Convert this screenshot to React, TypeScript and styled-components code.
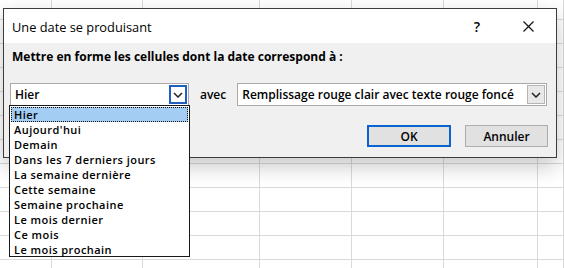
import React from 'react';
import styled, { createGlobalStyle } from 'styled-components';

const GlobalStyle = createGlobalStyle`
  html, body {
    margin: 0;
    padding: 0;
    background: #ffffff;
  }
  body {
    font-family: "Open Sans", "Noto Sans", "Liberation Sans", sans-serif;
    color: #000;
  }
`;

const columns = [52, 91, 117, 92, 92, 94, 26];
const rowCount = 11;

const Page = styled.div`
  position: relative;
  width: 564px;
  height: 268px;
  overflow: hidden;
  background: #fff;
`;

// feuille excel derriere la boite de dialogue
const Sheet = styled.div`
  display: grid;
  grid-template-columns: ${columns.map(c => `${c}px`).join(' ')};
  grid-template-rows: 20px repeat(${rowCount}, 24px);
`;

const Cell = styled.div`
  border-right: 1px solid #dadada;
  border-bottom: 1px solid #dadada;
`;

const Dialog = styled.div`
  position: absolute;
  left: 3px;
  top: 8px;
  width: 554px;
  height: 150px;
  box-sizing: border-box;
  border: 1px solid #3c3c3c;
  background: #f0f0f0;
  box-shadow: 0 8px 20px rgba(0, 0, 0, 0.22);
  display: flex;
  flex-direction: column;
`;

const TitleBar = styled.div`
  height: 34px;
  background: #fff;
  display: flex;
  align-items: center;
  padding: 0 0 0 8px;
`;

const Title = styled.span`
  flex: 1;
  font-size: 12.8px;
  padding-top: 2px;
`;

const TitleButton = styled.div<{ $width: number }>`
  width: ${props => props.$width}px;
  height: 34px;
  display: flex;
  align-items: center;
  justify-content: center;
  font-size: 14px;
  font-weight: 600;
`;

const Body = styled.div`
  flex: 1;
  padding: 6px 8px 0 6px;
  display: flex;
  flex-direction: column;
`;

const Label = styled.div`
  font-size: 12px;
  font-weight: 700;
  line-height: 16px;
  padding-left: 2px;
`;

const FieldRow = styled.div`
  display: flex;
  align-items: center;
  margin-top: 18px;
  height: 23px;
`;

const Combo = styled.div<{ $width: number }>`
  position: relative;
  width: ${props => props.$width}px;
  height: 23px;
  box-sizing: border-box;
  border: 1px solid #a9a9a9;
  background: #fff;
  display: flex;
  align-items: center;
  padding: 0 1px 0 4px;
`;

const ComboText = styled.span`
  flex: 1;
  font-size: 12px;
  font-weight: 600;
  white-space: nowrap;
`;

const ComboButton = styled.div<{ $focused?: boolean }>`
  width: 18px;
  height: 19px;
  box-sizing: border-box;
  display: flex;
  align-items: center;
  justify-content: center;
  border: ${props => (props.$focused ? '2px solid #1f5fbf' : '1px solid #b4b4b4')};
  background: ${props => (props.$focused ? '#fff' : '#e8e8e8')};
`;

const With = styled.span`
  font-size: 12px;
  font-weight: 600;
  margin: 0 11px 0 11px;
`;

const List = styled.div`
  position: absolute;
  left: -2px;
  top: 21px;
  width: 181px;
  height: 152px;
  box-sizing: border-box;
  border: 1px solid #1a1a1a;
  background: #fff;
  padding: 1px;
  z-index: 2;
`;

const Item = styled.div<{ $selected?: boolean }>`
  height: 15px;
  line-height: 15px;
  font-size: 11px;
  letter-spacing: 0.45px;
  font-weight: 600;
  padding-left: 3px;
  white-space: nowrap;
  background: ${props => (props.$selected ? '#a3cdf3' : 'transparent')};
  outline: ${props => (props.$selected ? '1px dotted #111' : 'none')};
  outline-offset: -1px;
`;

const Buttons = styled.div`
  display: flex;
  justify-content: flex-end;
  gap: 14px;
  margin-top: 19px;
`;

const Button = styled.div<{ $primary?: boolean }>`
  width: ${props => (props.$primary ? 84 : 83)}px;
  height: 22px;
  box-sizing: border-box;
  display: flex;
  align-items: center;
  justify-content: center;
  font-size: 12px;
  font-weight: 600;
  background: #e1e1e1;
  border: ${props => (props.$primary ? '2px solid #0a64d0' : '1px solid #adadad')};
`;

const Chevron = () => (
  <svg width="10" height="6" viewBox="0 0 10 6">
    <path d="M1 1 L5 5 L9 1" fill="none" stroke="#222" strokeWidth="1.5" />
  </svg>
);

const CloseIcon = () => (
  <svg width="11" height="11" viewBox="0 0 11 11">
    <path d="M0.5 0.5 L10.5 10.5 M10.5 0.5 L0.5 10.5" stroke="#111" strokeWidth="1.2" />
  </svg>
);

const options = [
  'Hier',
  "Aujourd'hui",
  'Demain',
  'Dans les 7 derniers jours',
  'La semaine dernière',
  'Cette semaine',
  'Semaine prochaine',
  'Le mois dernier',
  'Ce mois',
  'Le mois prochain',
];

const App = () => {
  const cells = [];
  for (let r = 0; r <= rowCount; r++) {
    for (let c = 0; c < columns.length; c++) {
      cells.push(<Cell key={`${r}-${c}`} />);
    }
  }
  return (
    <Page>
      <GlobalStyle />
      <Sheet>{cells}</Sheet>
      <Dialog>
        <TitleBar>
          <Title>Une date se produisant</Title>
          <TitleButton $width={46}>?</TitleButton>
          <TitleButton $width={56}>
            <CloseIcon />
          </TitleButton>
        </TitleBar>
        <Body>
          <Label>Mettre en forme les cellules dont la date correspond à :</Label>
          <FieldRow>
            <Combo $width={179}>
              <ComboText>Hier</ComboText>
              <ComboButton $focused>
                <Chevron />
              </ComboButton>
              <List>
                {options.map((o, i) => (
                  <Item key={o} $selected={i === 0}>
                    {o}
                  </Item>
                ))}
              </List>
            </Combo>
            <With>avec</With>
            <Combo $width={310}>
              <ComboText>Remplissage rouge clair avec texte rouge foncé</ComboText>
              <ComboButton>
                <Chevron />
              </ComboButton>
            </Combo>
          </FieldRow>
          <Buttons>
            <Button $primary>OK</Button>
            <Button>Annuler</Button>
          </Buttons>
        </Body>
      </Dialog>
    </Page>
  );
};

export default App;
